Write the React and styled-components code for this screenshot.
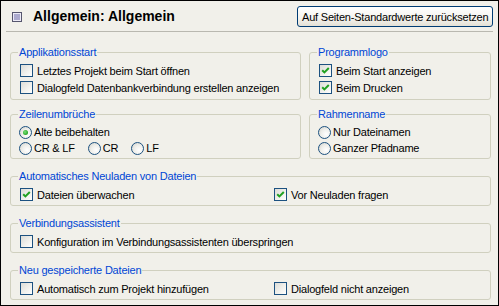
import React from "react";
import styled, { createGlobalStyle } from "styled-components";

const GlobalStyle = createGlobalStyle`
  html, body {
    margin: 0;
    padding: 0;
    background: #ffffff;
  }
  body {
    font-family: "Liberation Sans", Arial, sans-serif;
  }
`;

const Page = styled.div`
  width: 499px;
  height: 306px;
  box-sizing: border-box;
  border: 1px solid #000;
  background: #f1f0ea;
  display: flex;
  flex-direction: column;
  font-size: 11px;
  letter-spacing: -0.2px;
  color: #000;
`;

const Header = styled.div`
  display: flex;
  align-items: center;
  padding: 5px 5px 4px 11px;
`;

const Title = styled.h1`
  flex: 1;
  margin: 0 0 0 11px;
  font-size: 14px;
  font-weight: bold;
  letter-spacing: 0;
  line-height: 17px;
`;

const ResetButton = styled.button`
  height: 21px;
  width: 196px;
  padding: 0 4px;
  border: 1px solid #003c74;
  border-radius: 3px;
  background: linear-gradient(#ffffff 0%, #f4f3ee 60%, #e3e0d5 100%);
  font-family: inherit;
  font-size: 11px;
  letter-spacing: -0.2px;
  color: #000;
  white-space: nowrap;
`;

const Separator = styled.div`
  height: 1px;
  margin: 0 5px;
  background: #b9b8b0;
`;

const Content = styled.div`
  display: flex;
  flex-direction: column;
  gap: 11px;
  padding: 14px 7px 0 9px;
`;

const TwoCol = styled.div`
  display: grid;
  grid-template-columns: 291px 182px;
  column-gap: 8px;
  margin-bottom: ${(p) => p.$pull || 0}px;
`;

const Group = styled.fieldset`
  margin: 0;
  min-width: 0;
  border: 1px solid #d0d0bf;
  border-radius: 3px;
  padding: 3px 8px ${(p) => p.$bottom ?? 2}px 8px;
  display: flex;
  flex-direction: column;
`;

const Legend = styled.legend`
  color: #0046d5;
  padding: 0 1px;
  margin-left: -1px;
  font-size: 11px;
  line-height: 13px;
`;

const Row = styled.div`
  display: flex;
  align-items: center;
  height: ${(p) => p.$h || 17}px;
  gap: 13px;
`;

const SplitRow = styled.div`
  display: grid;
  grid-template-columns: 254px auto;
  align-items: center;
  height: 17px;
`;

const Option = styled.label`
  display: flex;
  align-items: center;
  gap: ${(p) => (p.$radio ? 2 : 4)}px;
  white-space: nowrap;
`;

const Box = styled.span`
  width: 11px;
  height: 11px;
  margin-left: 1px;
  border: 1px solid #1c5180;
  background: linear-gradient(135deg, #dcdcd7 0%, #f2f2ee 60%, #ffffff 100%);
  display: flex;
  align-items: center;
  justify-content: center;
`;

const Radio = styled.span`
  width: 11px;
  height: 11px;
  border-radius: 50%;
  border: 1px solid #1c5180;
  background: radial-gradient(circle at 65% 65%, #ffffff 0%, #eeeeea 50%, #cfcfc8 100%);
  display: flex;
  align-items: center;
  justify-content: center;
`;

const Dot = styled.span`
  width: 5px;
  height: 5px;
  border-radius: 50%;
  background: radial-gradient(circle at 40% 40%, #7be07b 0%, #2fb02f 60%, #1d8f1d 100%);
`;

const PageIcon = () => (
  <svg width="10" height="10" viewBox="0 0 10 10">
    <rect x="0.5" y="0.5" width="9" height="9" fill="#eceaf6" stroke="#56566e" />
    <path d="M2 3h6M2 5h6M2 7h6" stroke="#6c6aa6" strokeWidth="1" />
  </svg>
);

const Check = ({ checked, children }) => (
  <Option>
    <Box>
      {checked && (
        <svg width="9" height="9" viewBox="0 0 9 9">
          <path d="M1.2 4.2 L3.4 6.4 L7.8 2" fill="none" stroke="#21a121" strokeWidth="2" />
        </svg>
      )}
    </Box>
    {children}
  </Option>
);

const RadioOption = ({ selected, children }) => (
  <Option $radio>
    <Radio>{selected && <Dot />}</Radio>
    {children}
  </Option>
);

export default function App() {
  return (
    <>
      <GlobalStyle />
      <Page>
        <Header>
          <PageIcon />
          <Title>Allgemein: Allgemein</Title>
          <ResetButton>Auf Seiten-Standardwerte zurücksetzen</ResetButton>
        </Header>
        <Separator />
        <Content>
          <TwoCol $pull={-3}>
            <Group $bottom={3}>
              <Legend>Applikationsstart</Legend>
              <Row><Check>Letztes Projekt beim Start öffnen</Check></Row>
              <Row><Check>Dialogfeld Datenbankverbindung erstellen anzeigen</Check></Row>
            </Group>
            <Group $bottom={3}>
              <Legend>Programmlogo</Legend>
              <Row><Check checked>Beim Start anzeigen</Check></Row>
              <Row><Check checked>Beim Drucken</Check></Row>
            </Group>
          </TwoCol>
          <TwoCol>
            <Group>
              <Legend>Zeilenumbrüche</Legend>
              <Row $h={16}><RadioOption selected>Alte beibehalten</RadioOption></Row>
              <Row $h={16}>
                <RadioOption>CR &amp; LF</RadioOption>
                <RadioOption>CR</RadioOption>
                <RadioOption>LF</RadioOption>
              </Row>
            </Group>
            <Group>
              <Legend>Rahmenname</Legend>
              <Row $h={16}><RadioOption>Nur Dateinamen</RadioOption></Row>
              <Row $h={16}><RadioOption>Ganzer Pfadname</RadioOption></Row>
            </Group>
          </TwoCol>
          <Group>
            <Legend>Automatisches Neuladen von Dateien</Legend>
            <SplitRow>
              <Check checked>Dateien überwachen</Check>
              <Check checked>Vor Neuladen fragen</Check>
            </SplitRow>
          </Group>
          <Group>
            <Legend>Verbindungsassistent</Legend>
            <Row><Check>Konfiguration im Verbindungsassistenten überspringen</Check></Row>
          </Group>
          <Group>
            <Legend>Neu gespeicherte Dateien</Legend>
            <SplitRow>
              <Check>Automatisch zum Projekt hinzufügen</Check>
              <Check>Dialogfeld nicht anzeigen</Check>
            </SplitRow>
          </Group>
        </Content>
      </Page>
    </>
  );
}
